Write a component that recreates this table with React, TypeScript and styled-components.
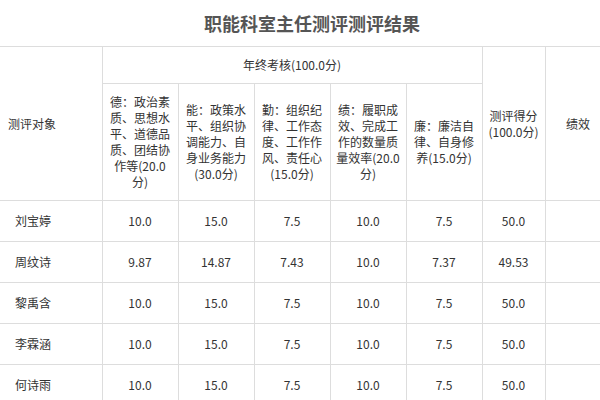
import React from "react";
import styled, { createGlobalStyle } from "styled-components";

const Global = createGlobalStyle`
  html, body { margin: 0; padding: 0; background: #fff; overflow: hidden; }
  body { font-family: "Microsoft YaHei", "Noto Sans CJK SC", sans-serif; color: #333; }
`;

const Page = styled.div`
  width: 624px;
`;

const Title = styled.h1`
  margin: 0;
  height: 46px;
  display: flex;
  align-items: center;
  justify-content: center;
  font-size: 18px;
  font-weight: bold;
  color: #555;
`;

const Table = styled.table`
  border-collapse: collapse;
  table-layout: fixed;
  width: 611px;
  font-size: 12px;
  line-height: 16px;
  color: #333;
`;

const Cell = styled.td<{ $align?: "left" | "center"; $pad?: number; $h?: number }>`
  border: 1px solid #ddd;
  padding: 0 ${(p) => p.$pad ?? 5}px;
  text-align: ${(p) => p.$align ?? "center"};
  vertical-align: middle;
  height: ${(p) => p.$h ?? 41}px;
  box-sizing: border-box;
  &:first-child { border-left: none; }
`;

const HeadCell = styled(Cell).attrs({ as: "th" })`
  font-weight: normal;
`;

const widths = [102, 76, 76, 76, 76, 76, 63, 66];

const subHeads = [
  "德：政治素质、思想水平、道德品质、团结协作等(20.0分)",
  "能：政策水平、组织协调能力、自身业务能力(30.0分)",
  "勤：组织纪律、工作态度、工作作风、责任心(15.0分)",
  "绩：履职成效、完成工作的数量质量效率(20.0分)",
  "廉：廉洁自律、自身修养(15.0分)",
];

const rows: string[][] = [
  ["刘宝婷", "10.0", "15.0", "7.5", "10.0", "7.5", "50.0", ""],
  ["周纹诗", "9.87", "14.87", "7.43", "10.0", "7.37", "49.53", ""],
  ["黎禹含", "10.0", "15.0", "7.5", "10.0", "7.5", "50.0", ""],
  ["李霖涵", "10.0", "15.0", "7.5", "10.0", "7.5", "50.0", ""],
  ["何诗雨", "10.0", "15.0", "7.5", "10.0", "7.5", "50.0", ""],
];

export default function App() {
  return (
    <Page>
      <Global />
      <Title>职能科室主任测评测评结果</Title>
      <Table>
        <colgroup>
          {widths.map((w, i) => (
            <col key={i} style={{ width: w }} />
          ))}
        </colgroup>
        <thead>
          <tr>
            <HeadCell rowSpan={2} $align="left" $pad={8}>测评对象</HeadCell>
            <HeadCell colSpan={5} $h={37}>年终考核(100.0分)</HeadCell>
            <HeadCell rowSpan={2} $pad={3}>测评得分(100.0分)</HeadCell>
            <HeadCell rowSpan={2}>绩效</HeadCell>
          </tr>
          <tr>
            {subHeads.map((s, i) => (
              <HeadCell key={i} $h={117}>{s}</HeadCell>
            ))}
          </tr>
        </thead>
        <tbody>
          {rows.map((r, i) => (
            <tr key={i}>
              {r.map((c, j) => (
                <Cell key={j} $align={j === 0 ? "left" : "center"} $pad={j === 0 ? 15 : 5}>
                  {c}
                </Cell>
              ))}
            </tr>
          ))}
        </tbody>
      </Table>
    </Page>
  );
}
